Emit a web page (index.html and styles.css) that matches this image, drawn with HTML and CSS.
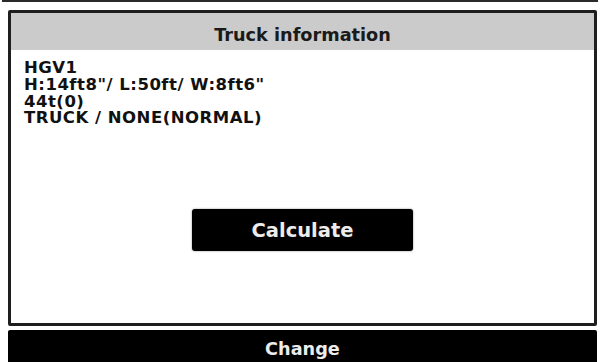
FILE: index.html
```html
<!DOCTYPE html>
<html>
<head>
<meta charset="utf-8">
<link rel="stylesheet" href="styles.css">
</head>
<body>
<div class="screen">
  <div class="topline"></div>
  <div class="panel">
    <div class="panel-header">Truck information</div>
    <div class="panel-body">
      <div class="info">
        <div>HGV1</div>
        <div>H:14ft8"/ L:50ft/ W:8ft6"</div>
        <div>44t(0)</div>
        <div>TRUCK / NONE(NORMAL)</div>
      </div>
      <div class="actions">
        <button class="btn-calc">Calculate</button>
      </div>
    </div>
  </div>
  <div class="change-bar">Change</div>
</div>
</body>
</html>
```
FILE: styles.css
```css
html, body {
  margin: 0;
  padding: 0;
  background: #ffffff;
}
.screen {
  width: 601px;
  height: 362px;
  overflow: hidden;
  display: flex;
  flex-direction: column;
  font-family: "DejaVu Sans", Verdana, sans-serif;
  font-weight: bold;
  color: #111;
}
.topline {
  height: 2px;
  margin: 0 3px 0 2px;
  background: #2a2a2a;
}
.panel {
  margin: 8px 4px 0 8px;
  height: 316px;
  box-sizing: border-box;
  border: 3px solid #1e1e1e;
  border-radius: 2px;
  display: flex;
  flex-direction: column;
  background: #fff;
}
.panel-header {
  height: 37px;
  box-sizing: border-box;
  padding-top: 7px;
  background: #cbcbcb;
  display: flex;
  align-items: center;
  justify-content: center;
  font-size: 17.7px;
  color: #1a1a1a;
}
.panel-body {
  flex: 1;
  display: flex;
  flex-direction: column;
  padding: 10px 13px;
}
.info {
  font-size: 16.5px;
  line-height: 16.8px;
  letter-spacing: 0.5px;
}
.actions {
  display: flex;
  justify-content: center;
  margin-top: 82px;
}
.btn-calc {
  width: 221px;
  height: 42px;
  padding: 0;
  background: #000;
  color: #ececec;
  border: none;
  border-radius: 3px;
  font-family: "DejaVu Sans", Verdana, sans-serif;
  font-weight: bold;
  font-size: 19.5px;
  box-shadow: 0 0 2px rgba(0,0,0,0.5);
}
.change-bar {
  margin: 4px 4px 0 8px;
  padding-top: 6px;
  flex: 1;
  background: #000;
  color: #ececec;
  display: flex;
  align-items: center;
  justify-content: center;
  font-size: 17.7px;
  border-radius: 2px 2px 0 0;
}
```
